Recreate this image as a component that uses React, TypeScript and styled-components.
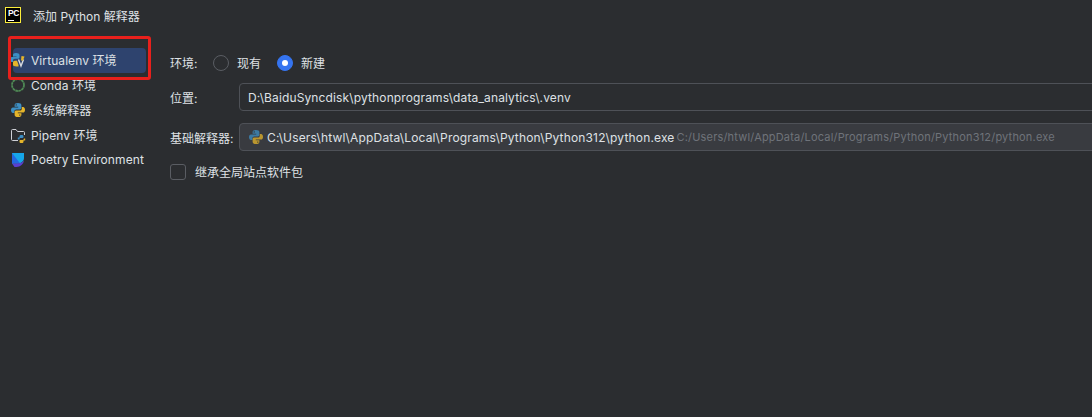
import styled, { createGlobalStyle } from 'styled-components'

const GlobalStyle = createGlobalStyle`
    html, body {
        margin:0;
        padding:0;
        width:1092px;
        height:417px;
        overflow:hidden;
        background:#2b2d30;
    }
`

const Dialog = styled.div`
    position:relative;
    width:1092px;
    height:417px;
    overflow:hidden;
    background:#2b2d30;
    color:#dfe1e5;
    font-family:"Inter", "Noto Sans CJK SC", sans-serif;
    font-size:12px;
`

const TitleBar = styled.div`
    display:flex;
    align-items:center;
    height:30px;
    padding-left:5px;
    gap:12px;
    font-size:12px;
`

const Body = styled.div`
    display:flex;
`

const Sidebar = styled.div`
    flex:none;
    width:133px;
    margin:18px 0 0 13px;
    display:flex;
    flex-direction:column;
`

const SideItem = styled.div<{ $active?: boolean }>`
    display:flex;
    align-items:center;
    gap:5px;
    height:25px;
    box-sizing:border-box;
    padding-bottom:2px;
    border-radius:4px;
    white-space:nowrap;
    letter-spacing:0.08px;
    background:${({ $active }) => ($active ? '#2e436e' : 'transparent')};
`

const IconSlot = styled.span`
    flex:none;
    width:16px;
    height:16px;
    margin-left:-3px;
    display:flex;
    align-items:center;
    justify-content:center;
`

const Annotation = styled.div`
    position:absolute;
    left:8px;
    top:36px;
    width:143px;
    height:44px;
    box-sizing:border-box;
    border:3px solid #e8201c;
    border-radius:3px;
`

const Form = styled.div`
    flex:none;
    margin:20px 0 0 24px;
    display:flex;
    flex-direction:column;
    width:1000px;
`

const Row = styled.div<{ $mt: number }>`
    display:flex;
    align-items:center;
    margin-top:${({ $mt }) => $mt}px;
`

const Label = styled.div<{ $width?: number }>`
    width:${({ $width }) => $width || 69}px;
    flex:none;
    white-space:nowrap;
`

const Radio = styled.span<{ $checked?: boolean }>`
    width:16px;
    height:16px;
    box-sizing:border-box;
    border-radius:50%;
    display:flex;
    align-items:center;
    justify-content:center;
    margin-right:8px;
    border:1px solid ${({ $checked }) => ($checked ? '#3574f0' : '#5a5d63')};
    background:${({ $checked }) => ($checked ? '#3574f0' : 'transparent')};
    &::after {
        content:'';
        width:6px;
        height:6px;
        border-radius:50%;
        background:${({ $checked }) => ($checked ? '#fff' : 'transparent')};
    }
`

const RadioText = styled.span`
    margin-right:16px;
`

const Field = styled.div<{ $filled?: boolean }>`
    flex:none;
    width:900px;
    height:28px;
    box-sizing:border-box;
    display:flex;
    align-items:center;
    white-space:nowrap;
    border:1px solid #4e5157;
    border-radius:4px;
    padding-left:${({ $filled }) => ($filled ? '9px' : '8px')};
    background:${({ $filled }) => ($filled ? '#393b40' : 'transparent')};
    letter-spacing:${({ $filled }) => ($filled ? '0.16px' : '0.13px')};
    gap:4px;
`

const Hint = styled.span`
    color:#6f737a;
    font-size:11px;
    letter-spacing:0.18px;
    margin-left:-2px;
`

const CheckBox = styled.span`
    width:16px;
    height:16px;
    box-sizing:border-box;
    flex:none;
    border:1px solid #5a5d63;
    border-radius:3px;
    margin-right:9px;
`

const IconSvg = styled.svg<{ $dim?: boolean }>`
    flex:none;
    display:block;
    opacity:${({ $dim }) => ($dim ? 0.75 : 1)};
`

const LogoMark = styled.div`
    flex:none;
    width:16px;
    height:16px;
    box-sizing:border-box;
    background:#000;
    border:1px solid #fcee3a;
    color:#fff;
    font:bold 8.5px/10px "Liberation Sans", sans-serif;
    letter-spacing:-0.3px;
    padding-left:2px;
    position:relative;
    &::after {
        content:'';
        position:absolute;
        left:2px;
        bottom:1px;
        width:6px;
        height:1px;
        background:#fff;
    }
`

const PythonIcon = ({ dim }: { dim?: boolean }) => (
    <IconSvg $dim={dim} width={14} height={14} viewBox="1 1 14 14">
        <path fill="#3d8fc4" d="M8 1C5.6 1 4.6 1.9 4.6 3.3V4.8H8.2V5.4H3C1.6 5.4 1 6.7 1 8.1S1.6 11 3 11H4.4V9.3C4.4 8.1 5.3 7.4 6.4 7.4H9.7C10.7 7.4 11.4 6.7 11.4 5.7V3.3C11.4 1.9 10.2 1 8 1Z" />
        <path fill="#e5b52a" d="M8 15C10.4 15 11.4 14.1 11.4 12.7V11.2H7.8V10.6H13C14.4 10.6 15 9.3 15 7.9S14.4 5 13 5H11.8V6.7C11.8 7.9 10.9 8.6 9.8 8.6H6.3C5.3 8.6 4.6 9.3 4.6 10.3V12.7C4.6 14.1 5.8 15 8 15Z" />
        <circle cx="6.2" cy="2.9" r="0.7" fill="#2b2d30" />
        <circle cx="9.8" cy="13.1" r="0.7" fill="#2b2d30" />
    </IconSvg>
)

const VirtualenvIcon = () => (
    <IconSvg width={16} height={16} viewBox="0 0 16 16">
        <path fill="#3d8fc4" d="M6 1C3.8 1 3 1.8 3 3V4.5H6.5V5H1.8C.6 5 0 6 0 7.3S.6 10 1.8 10H3V8.5C3 7.5 3.8 6.8 4.8 6.8H8C9 6.8 9.5 6.2 9.5 5.3V3C9.5 1.8 8.2 1 6 1Z" />
        <path fill="#e5b52a" d="M6.5 14.5C4.2 14.5 3 14 3 12.8V10.5C3 9.5 3.8 8.8 4.8 8.8H7L8.5 13V14.5Z" />
        <path fill="none" stroke="#d8dade" strokeWidth="1.4" d="M8.5 7.5L11 14L13.5 7.5" />
        <path fill="#e5b52a" d="M11.5 4L14.5 4.5L13 8.5H11Z" />
    </IconSvg>
)

const CondaIcon = () => (
    <IconSvg width={16} height={16} viewBox="0 0 16 16">
        <circle cx="8" cy="8" r="6" fill="none" stroke="#4f8a55" strokeWidth="1.8" strokeDasharray="2.6 0.5" />
    </IconSvg>
)

const PipenvIcon = () => (
    <IconSvg width={16} height={16} viewBox="0 0 16 16">
        <path fill="none" stroke="#ced0d6" strokeWidth="1" d="M8 13.5H2.5C1.9 13.5 1.5 13.1 1.5 12.5V3.5C1.5 2.9 1.9 2.5 2.5 2.5H6L7.5 4.5H13.5C14.1 4.5 14.5 4.9 14.5 5.5V8" />
        <path fill="#3d8fc4" d="M11.5 8C10 8 9.5 8.6 9.5 9.3V10.5H7.8V12.5H9.5V11.7C9.5 11.2 10 10.9 10.4 10.9H12.5C13 10.9 13.5 10.5 13.5 10V9.3C13.5 8.6 13 8 11.5 8Z" />
        <path fill="#e5b52a" d="M11.5 16C13 16 13.5 15.4 13.5 14.7V13.5H15.2V11.5H13.9V12C13.9 12.5 13.4 12.9 13 12.9H10.5C10 12.9 9.5 13.3 9.5 13.8V14.7C9.5 15.4 10 16 11.5 16Z" />
    </IconSvg>
)

const PoetryIcon = () => (
    <IconSvg width={16} height={16} viewBox="0 0 16 16">
        <path fill="#16a6e8" d="M2 1H14V6C14 9.5 11 11.5 7 11.5H2Z" />
        <path fill="#2468e0" d="M2 1L10 11.2C9 11.4 8 11.5 7 11.5H2Z" />
        <path fill="#5a3fd0" d="M2 11.5H7C10 11.5 12.8 10.5 14 8.5C13.5 12 10.5 15 6.5 15H4.5Z" />
    </IconSvg>
)

const items = [
    { label: 'Virtualenv 环境', icon: <VirtualenvIcon />, active: true },
    { label: 'Conda 环境', icon: <CondaIcon /> },
    { label: '系统解释器', icon: <PythonIcon /> },
    { label: 'Pipenv 环境', icon: <PipenvIcon /> },
    { label: 'Poetry Environment', icon: <PoetryIcon /> }
]

const App = () => {
    return (
        <Dialog>
            <GlobalStyle />
            <TitleBar>
                <LogoMark>PC</LogoMark>
                添加 Python 解释器
            </TitleBar>
            <Body>
                <Sidebar>
                    {items.map(item => (
                        <SideItem key={item.label} $active={item.active}>
                            <IconSlot>{item.icon}</IconSlot>
                            {item.label}
                        </SideItem>
                    ))}
                </Sidebar>
                <Form>
                    <Row $mt={4}>
                        <Label $width={43}>环境:</Label>
                        <Radio />
                        <RadioText>现有</RadioText>
                        <Radio $checked />
                        <RadioText>新建</RadioText>
                    </Row>
                    <Row $mt={12}>
                        <Label>位置:</Label>
                        <Field>D:\BaiduSyncdisk\pythonprograms\data_analytics\.venv</Field>
                    </Row>
                    <Row $mt={12}>
                        <Label>基础解释器:</Label>
                        <Field $filled>
                            <PythonIcon dim />
                            C:\Users\htwl\AppData\Local\Programs\Python\Python312\python.exe
                            <Hint>C:/Users/htwl/AppData/Local/Programs/Python/Python312/python.exe</Hint>
                        </Field>
                    </Row>
                    <Row $mt={12}>
                        <CheckBox />
                        继承全局站点软件包
                    </Row>
                </Form>
            </Body>
            <Annotation />
        </Dialog>
    )
}

export default App
